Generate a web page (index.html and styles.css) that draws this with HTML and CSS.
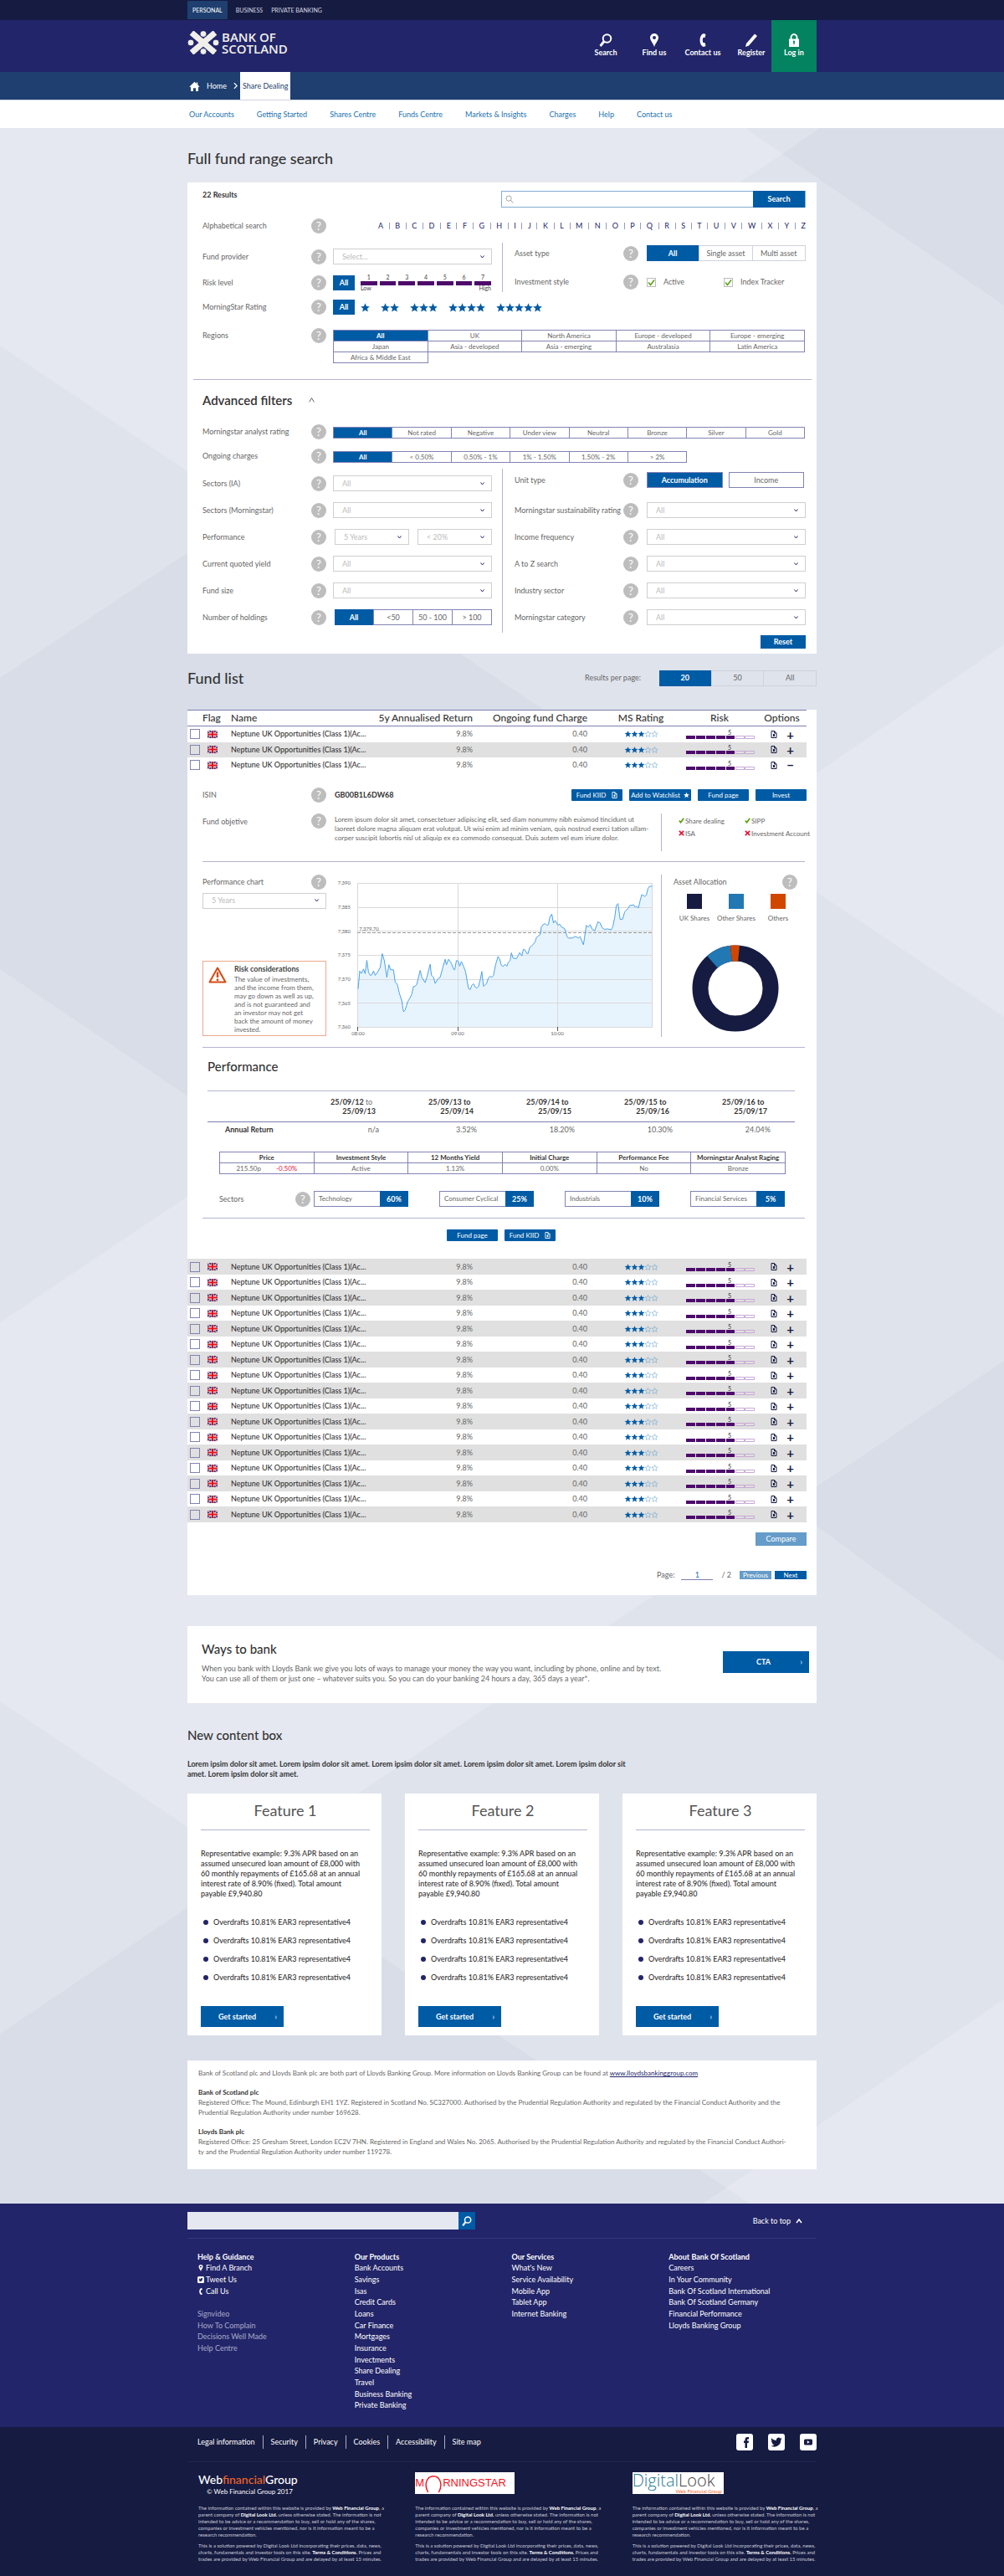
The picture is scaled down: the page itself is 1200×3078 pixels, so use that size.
FILE: index.html
```html
<!DOCTYPE html>
<html lang="en">
<head>
<meta charset="utf-8">
<meta name="viewport" content="width=device-width, initial-scale=1">
<title>Full fund range search - Bank of Scotland</title>
<link rel="stylesheet" href="styles.css">
</head>
<body id="top">
<svg class="sprite" aria-hidden="true">
  <symbol id="i-search" viewBox="0 0 16 16"><circle cx="9.500" cy="6" r="4.800" fill="none" stroke="currentColor" stroke-width="2"/><path d="M6 9.500 1.500 15" stroke="currentColor" stroke-width="2.800" fill="none"/></symbol>
  <symbol id="i-lens" viewBox="0 0 16 16"><circle cx="6.500" cy="6.500" r="5" fill="none" stroke="currentColor" stroke-width="1"/><path d="m10 10 5 5" stroke="currentColor" stroke-width="1.200" fill="none"/></symbol>
  <symbol id="i-pin" viewBox="0 0 16 16"><path fill="currentColor" fill-rule="evenodd" d="M8 0a5 5 0 0 0-5 5c0 3.500 3.800 6.500 5 11 1.200-4.500 5-7.500 5-11a5 5 0 0 0-5-5zm0 3a2 2 0 1 1 0 4 2 2 0 0 1 0-4z"/></symbol>
  <symbol id="i-phone" viewBox="0 0 16 16"><path fill="currentColor" d="M9 0c-3 1-4.500 4-4.500 8s1.500 7 4.500 8l2.500-1-1-4-2 .3C7.600 9.500 7.600 6.500 8.500 4.700l2 .3 1-4z"/></symbol>
  <symbol id="i-pen" viewBox="0 0 16 16"><path fill="currentColor" d="m12 .5 3 2.500L5 14.500 1 16l1-4z"/></symbol>
  <symbol id="i-lock" viewBox="0 0 16 16"><path d="M4.500 7V5a3.500 4 0 0 1 7 0v2" fill="none" stroke="currentColor" stroke-width="2"/><path fill="currentColor" fill-rule="evenodd" d="M2 6.500h12V16H2zm6 2a1.300 1.300 0 0 0-.7 2.300V13h1.400v-2.200A1.300 1.300 0 0 0 8 8.500z"/></symbol>
  <symbol id="i-home" viewBox="0 0 16 16"><path fill="currentColor" d="M8 1 0 8.500l1 1 1-.8V16h4v-5h4v5h4V8.700l1 .8 1-1-3-2.800V2h-2v2z"/></symbol>
  <symbol id="i-star" viewBox="0 0 16 16"><path fill="currentColor" d="m8 .5 2.200 5.200 5.600.4-4.300 3.600 1.400 5.600L8 12.200l-4.900 3.100 1.400-5.600L.2 6.100l5.600-.4z"/></symbol>
  <symbol id="i-star3" viewBox="0 0 80 16">
    <g fill="#005ba5"><path id="s" d="m8 .5 2.200 5.200 5.600.4-4.300 3.600 1.400 5.600L8 12.200l-4.900 3.100 1.400-5.600L.2 6.100l5.600-.4z"/><use href="#s" x="16"/><use href="#s" x="32"/></g>
    <path id="o" fill="none" stroke="#5f9ccb" d="m56 1 2 5 5.200.3-4 3.300 1.300 5.200L56 12l-4.500 2.800 1.300-5.200-4-3.300L54 6z"/><use href="#o" x="16"/>
  </symbol>
  <symbol id="i-risk" viewBox="0 0 82 5"><path fill="#4d0a6b" d="M0 1h11v4H0zM12 1h11v4H12zM24 1h11v4H24zM36 1h11v4H36zM48 1h10v4H48z"/><path fill="none" stroke="#c9a9d6" d="M59.500 1.500h10v3h-10zM70.500 1.500h11v3h-11z"/></symbol>
  <symbol id="i-doc" viewBox="0 0 8 9"><path fill="none" stroke="currentColor" d="M1 .5h3.500L7 3v5.500H1zM4.500.5V3H7"/><path fill="currentColor" d="M3 4h2v3H3z"/></symbol>
  <symbol id="i-flag" viewBox="0 0 12 9"><path fill="#1f2a7c" d="M0 0h12v9H0z"/><path stroke="#fff" stroke-width="1.400" d="m0 0 12 9M12 0 0 9"/><path stroke="#d22" stroke-width=".6" d="m0 0 12 9M12 0 0 9"/><path stroke="#fff" stroke-width="3" d="M6 0v9M0 4.500h12"/><path stroke="#e0101c" stroke-width="2" d="M6 0v9M0 4.500h12"/></symbol>
  <symbol id="i-bird" viewBox="0 0 24 24"><path fill="currentColor" d="M22 5.900c-.7.300-1.500.6-2.400.7.900-.5 1.500-1.300 1.800-2.300-.8.500-1.700.8-2.600 1a4.100 4.100 0 0 0-7 3.700C8.400 8.800 5.400 7.200 3.400 4.700a4.100 4.100 0 0 0 1.300 5.500c-.7 0-1.300-.2-1.900-.5 0 2 1.400 3.700 3.300 4.100-.6.200-1.200.2-1.900.1a4.100 4.100 0 0 0 3.900 2.800A8.200 8.200 0 0 1 2 18.400 11.600 11.600 0 0 0 20 8c.8-.6 1.500-1.300 2-2.100z"/></symbol>
  <symbol id="i-tick" viewBox="0 0 8 8"><path fill="none" stroke="#5aa416" stroke-width="2" d="m1 4 2 2.500L7 1"/></symbol>
  <symbol id="i-cross" viewBox="0 0 8 8"><path fill="none" stroke="#e3173e" stroke-width="2" d="m1 1 6 6M7 1 1 7"/></symbol>
</svg>

<header>
  <div class="topbar"><nav class="wrap" aria-label="Sites"><a class="on" href="#">PERSONAL</a><a href="#">BUSINESS</a><a href="#">PRIVATE BANKING</a></nav></div>
  <div class="brandbar"><div class="wrap">
    <a class="logo" href="#">
      <svg viewBox="0 0 38 28" aria-hidden="true"><path stroke="#f0efe9" stroke-width="7" d="M5 2 33 26M33 2 5 26"/><g fill="#f0efe9" stroke="#222569"><circle cx="19" cy="3.500" r="4"/><circle cx="19" cy="24.500" r="4"/><circle cx="4" cy="14" r="4"/><circle cx="34" cy="14" r="4"/></g></svg>
      <span>BANK OF<br>SCOTLAND</span></a>
    <nav class="tools" aria-label="Tools">
      <a href="#"><svg><use href="#i-search"/></svg>Search</a>
      <a href="#"><svg><use href="#i-pin"/></svg>Find us</a>
      <a href="#"><svg><use href="#i-phone"/></svg>Contact us</a>
      <a href="#"><svg><use href="#i-pen"/></svg>Register</a>
      <a class="login" href="#"><svg><use href="#i-lock"/></svg>Log in</a>
    </nav>
  </div></div>
  <div class="crumbs"><nav class="wrap" aria-label="Breadcrumb"><a href="#"><svg><use href="#i-home"/></svg>Home</a><svg class="chev" viewBox="0 0 6 8" aria-hidden="true"><path d="m1 0 4 4-4 4" fill="none" stroke="#fff" stroke-width="1.500"/></svg><a class="here" href="#">Share Dealing</a></nav></div>
  <div class="mainnav"><nav class="wrap" aria-label="Main"><a href="#">Our Accounts</a><a href="#">Getting Started</a><a href="#">Shares Centre</a><a href="#">Funds Centre</a><a href="#">Markets &amp; Insights</a><a href="#">Charges</a><a href="#">Help</a><a href="#">Contact us</a></nav></div>
</header>

<main>
<svg class="facets" viewBox="0 153 1200 2480" preserveAspectRatio="none" aria-hidden="true">
  <path fill="#e5e8f1" d="M0 153h891l44 31-638 428L0 413zM871 996l329-226v445zM0 1580l313-210 629 429-646 432L0 2033zM868 2614l332-225v244H896z"/>
  <path fill="#d8dde8" d="M980 153h220v212L935 184zM0 810l297-198 574 384-558 374L0 1158zM942 1799l258-173v360zM0 2430l296-199 572 383-28 19H0z"/>
</svg>
<div class="wrap">
<h1>Full fund range search</h1>

<section class="panel filters">
  <div class="find"><strong>22 Results</strong>
    <form><svg><use href="#i-lens"/></svg><input type="text" aria-label="Search funds"><button class="btn" type="button">Search</button></form></div>
  <div class="row alpha"><span>Alphabetical search</span><button class="help">?</button>
    <div class="letters"><a href="#">A</a><i></i><a href="#">B</a><i></i><a href="#">C</a><i></i><a href="#">D</a><i></i><a href="#">E</a><i></i><a href="#">F</a><i></i><a href="#">G</a><i></i><a href="#">H</a><i></i><a href="#">I</a><i></i><a href="#">J</a><i></i><a href="#">K</a><i></i><a href="#">L</a><i></i><a href="#">M</a><i></i><a href="#">N</a><i></i><a href="#">O</a><i></i><a href="#">P</a><i></i><a href="#">Q</a><i></i><a href="#">R</a><i></i><a href="#">S</a><i></i><a href="#">T</a><i></i><a href="#">U</a><i></i><a href="#">V</a><i></i><a href="#">W</a><i></i><a href="#">X</a><i></i><a href="#">Y</a><i></i><a href="#">Z</a></div></div>
  <div class="halves">
    <div class="half left basic">
      <div class="row"><label for="provider">Fund provider</label><button class="help">?</button><select id="provider"><option>Select...</option></select></div>
      <div class="row"><span>Risk level</span><button class="help">?</button><div class="allplus"><button class="btn all">All</button>
        <div class="scale"><span>1</span><span>2</span><span>3</span><span>4</span><span>5</span><span>6</span><span>7</span><em>Low</em><em>High</em></div></div></div>
    </div>
    <div class="half right">
      <div class="row"><span>Asset type</span><button class="help">?</button><div class="seg pale"><button class="on">All</button><button>Single asset</button><button>Multi asset</button></div></div>
      <div class="row"><span>Investment style</span><button class="help">?</button><div class="checks"><label><input type="checkbox" checked>Active</label><label><input type="checkbox" checked>Index Tracker</label></div></div>
    </div>
  </div>
  <div class="row stars-row"><span>MorningStar Rating</span><button class="help">?</button><div class="allplus"><button class="btn all">All</button>
    <div class="stars">
      <button aria-label="1 star"><svg><use href="#i-star"/></svg></button>
      <button aria-label="2 stars"><svg><use href="#i-star"/></svg><svg><use href="#i-star"/></svg></button>
      <button aria-label="3 stars"><svg><use href="#i-star"/></svg><svg><use href="#i-star"/></svg><svg><use href="#i-star"/></svg></button>
      <button aria-label="4 stars"><svg><use href="#i-star"/></svg><svg><use href="#i-star"/></svg><svg><use href="#i-star"/></svg><svg><use href="#i-star"/></svg></button>
      <button aria-label="5 stars"><svg><use href="#i-star"/></svg><svg><use href="#i-star"/></svg><svg><use href="#i-star"/></svg><svg><use href="#i-star"/></svg><svg><use href="#i-star"/></svg></button>
    </div></div></div>
  <div class="row regions"><span>Regions</span><button class="help">?</button>
    <div class="cells five"><button class="on">All</button><button>UK</button><button>North America</button><button>Europe - developed</button><button>Europe - emerging</button><button>Japan</button><button>Asia - developed</button><button>Asia - emerging</button><button>Australasia</button><button>Latin America</button><button>Africa &amp; Middle East</button></div></div>
  <hr class="wide">
  <h2 class="adv">Advanced filters <button aria-label="Collapse"><svg viewBox="0 0 6 5"><path d="M.5 4.500 3 .5l2.500 4" fill="none" stroke="#555" stroke-width=".8"/></svg></button></h2>
  <div class="row first-adv"><span>Morningstar analyst rating</span><button class="help">?</button>
    <div class="cells eight"><button class="on">All</button><button>Not rated</button><button>Negative</button><button>Under view</button><button>Neutral</button><button>Bronze</button><button>Silver</button><button>Gold</button></div></div>
  <div class="row second-adv"><span>Ongoing charges</span><button class="help">?</button>
    <div class="cells eight"><button class="on">All</button><button>&lt; 0.50%</button><button>0.50% - 1%</button><button>1% - 1.50%</button><button>1.50% - 2%</button><button>&gt; 2%</button></div></div>
  <div class="halves adv-halves">
    <div class="half left">
      <div class="row"><label for="ia">Sectors (IA)</label><button class="help">?</button><select id="ia"><option>All</option></select></div>
      <div class="row"><label for="ms">Sectors (Morningstar)</label><button class="help">?</button><select id="ms"><option>All</option></select></div>
      <div class="row"><label for="perf">Performance</label><button class="help">?</button><div class="pair"><select id="perf"><option>5 Years</option></select><select aria-label="Performance range"><option>&lt; 20%</option></select></div></div>
      <div class="row"><label for="yield">Current quoted yield</label><button class="help">?</button><select id="yield"><option>All</option></select></div>
      <div class="row"><label for="size">Fund size</label><button class="help">?</button><select id="size"><option>All</option></select></div>
      <div class="row"><span>Number of holdings</span><button class="help">?</button><div class="seg inset"><button class="on">All</button><button>&lt;50</button><button>50 - 100</button><button>&gt; 100</button></div></div>
    </div>
    <div class="half right">
      <div class="row"><span>Unit type</span><button class="help">?</button><div class="units"><button class="on">Accumulation</button><button>Income</button></div></div>
      <div class="row"><label for="sus">Morningstar sustainability rating</label><button class="help">?</button><select id="sus"><option>All</option></select></div>
      <div class="row"><label for="freq">Income frequency</label><button class="help">?</button><select id="freq"><option>All</option></select></div>
      <div class="row"><label for="az">A to Z search</label><button class="help">?</button><select id="az"><option>All</option></select></div>
      <div class="row"><label for="ind">Industry sector</label><button class="help">?</button><select id="ind"><option>All</option></select></div>
      <div class="row"><label for="cat">Morningstar category</label><button class="help">?</button><select id="cat"><option>All</option></select></div>
    </div>
  </div>
  <button class="btn reset">Reset</button>
</section>

<div class="listhead"><h2>Fund list</h2><span>Results per page:</span><div class="seg pale"><button class="on">20</button><button>50</button><button>All</button></div></div>

<section class="panel funds">
<table class="list">
<colgroup><col class="c1"><col class="c2"><col><col class="c4"><col class="c5"><col class="c6"><col class="c7"><col class="c8"></colgroup>
<thead><tr><th></th><th class="f">Flag</th><th>Name</th><th class="n">5y Annualised Return</th><th class="n c">Ongoing fund Charge</th><th class="m">MS Rating</th><th class="m">Risk</th><th class="m">Options</th></tr></thead>
<tbody>
<tr><td><input type="checkbox" aria-label="Select fund"></td><td><svg class="flag"><use href="#i-flag"/></svg></td><td>Neptune UK Opportunities (Class 1)(Ac...</td><td class="n">9.8%</td><td class="n c">0.40</td><td class="m"><svg class="st"><use href="#i-star3"/></svg></td><td class="m"><span class="rk">5<svg><use href="#i-risk"/></svg></span></td><td class="m"><button class="op"><svg><use href="#i-doc"/></svg></button><button class="op">+</button></td></tr>
<tr class="g"><td><input type="checkbox" aria-label="Select fund"></td><td><svg class="flag"><use href="#i-flag"/></svg></td><td>Neptune UK Opportunities (Class 1)(Ac...</td><td class="n">9.8%</td><td class="n c">0.40</td><td class="m"><svg class="st"><use href="#i-star3"/></svg></td><td class="m"><span class="rk">5<svg><use href="#i-risk"/></svg></span></td><td class="m"><button class="op"><svg><use href="#i-doc"/></svg></button><button class="op">+</button></td></tr>
<tr><td><input type="checkbox" aria-label="Select fund"></td><td><svg class="flag"><use href="#i-flag"/></svg></td><td>Neptune UK Opportunities (Class 1)(Ac...</td><td class="n">9.8%</td><td class="n c">0.40</td><td class="m"><svg class="st"><use href="#i-star3"/></svg></td><td class="m"><span class="rk">5<svg><use href="#i-risk"/></svg></span></td><td class="m"><button class="op"><svg><use href="#i-doc"/></svg></button><button class="op">−</button></td></tr>
</tbody>
</table>

<div class="detail">
  <div class="row isin"><span>ISIN</span><button class="help">?</button><div class="isinline"><strong>GB00B1L6DW68</strong><button class="btn sm">Fund KIID <svg><use href="#i-doc"/></svg></button><button class="btn sm watch">Add to Watchlist <svg><use href="#i-star"/></svg></button><button class="btn sm">Fund page</button><button class="btn sm">Invest</button></div></div>
  <div class="row objective"><span>Fund objetive</span><button class="help">?</button>
    <p>Lorem ipsum dolor sit amet, consectetuer adipiscing elit, sed diam nonummy nibh euismod tincidunt ut<br>laoreet dolore magna aliquam erat volutpat. Ut wisi enim ad minim veniam, quis nostrud exerci tation ullam-<br>corper suscipit lobortis nisl ut aliquip ex ea commodo consequat. Duis autem vel eum iriure dolor.</p>
    <ul><li><svg><use href="#i-tick"/></svg>Share dealing</li><li><svg><use href="#i-tick"/></svg>SIPP</li><li><svg><use href="#i-cross"/></svg>ISA</li><li><svg><use href="#i-cross"/></svg>Investment Account</li></ul></div>
  <hr>
  <div class="charts">
    <div class="perfcol">
      <div class="lab"><label for="period">Performance chart</label><button class="help">?</button></div>
      <select id="period"><option>5 Years</option></select>
      <div class="risk"><svg viewBox="0 0 22 20" aria-hidden="true"><path d="M11 1.500 20.500 18.500H1.500z" fill="none" stroke="#d24a12" stroke-width="2" stroke-linejoin="round"/><path d="M11 6.500V13M11 14.500V17" stroke="#d24a12" stroke-width="2.400"/></svg>
        <div><strong>Risk considerations</strong><p>The value of investments,<br>and the income from them,<br>may go down as well as up,<br>and is not guaranteed and<br>an investor may not get<br>back the amount of money<br>invested.</p></div></div>
    </div>
    <svg class="line" viewBox="0 0 380 194" role="img" aria-label="Price history">
      <svg x="27" y="10" width="353" height="172" viewBox="436 106 709 517" preserveAspectRatio="none">
        <path fill="#e8f4fd" d="M438 623V487L442 422 446 431 451 415 455 432 459 384 463 427 467 438 471 436 475 422 479 438 484 428 491 410 496 360 501 385 507 445 512 400 516 418 523 418 527 462 532 470 537 502 543 530 547 569 551 562 557 533 563 518 567 505 571 478 575 477 579 470 587 420 591 445 599 464 604 440 611 398 614 437 619 445 623 467 630 450 635 445 641 412 647 380 650 400 655 380 662 395 667 415 670 418 674 385 678 386 682 405 686 388 691 405 696 425 700 460 703 485 707 489 711 474 715 468 719 480 723 484 727 478 731 455 735 424 739 477 746 468 751 447 755 441 759 445 763 438 768 400 774 370 778 380 782 402 786 406 791 398 795 405 799 390 803 385 806 357 810 376 818 378 823 365 826 356 831 368 835 344 839 347 843 359 846 360 850 338 855 332 863 318 866 302 871 296 875 292 878 264 882 256 887 252 891 258 895 256 898 230 903 218 907 250 911 241 918 258 922 254 927 265 934 270 940 300 943 304 952 304 960 298 967 304 971 299 979 328 986 258 990 265 995 256 1000 272 1006 278 1014 245 1019 250 1024 267 1030 273 1036 271 1046 274 1050 260 1054 230 1058 186 1062 180 1067 237 1073 236 1078 210 1086 198 1091 186 1095 187 1099 184 1103 193 1106 190 1111 196 1115 170 1119 148 1126 154 1130 150 1134 125 1138 118 1144 118V623z"/>
      </svg>
      <path fill="none" stroke="#d9d9d9" d="M27 10.500h353M27 39.500h353M27 67.500h353M27 96.500h353M27 125.500h353M27 153.500h353M27 182.500h353M27.500 10v172M147.500 10v172M266.500 10v172M379.500 10v172"/>
      <path fill="none" stroke="#999" stroke-dasharray="4 2" d="M27 69.500h353"/>
      <path fill="none" stroke="#555" d="M27.500 182v5M147.500 182v5M266.500 182v5"/>
      <svg x="27" y="10" width="353" height="172" viewBox="436 106 709 517" preserveAspectRatio="none">
        <path fill="none" stroke="#4aa3ea" vector-effect="non-scaling-stroke" d="M438 487L442 422 446 431 451 415 455 432 459 384 463 427 467 438 471 436 475 422 479 438 484 428 491 410 496 360 501 385 507 445 512 400 516 418 523 418 527 462 532 470 537 502 543 530 547 569 551 562 557 533 563 518 567 505 571 478 575 477 579 470 587 420 591 445 599 464 604 440 611 398 614 437 619 445 623 467 630 450 635 445 641 412 647 380 650 400 655 380 662 395 667 415 670 418 674 385 678 386 682 405 686 388 691 405 696 425 700 460 703 485 707 489 711 474 715 468 719 480 723 484 727 478 731 455 735 424 739 477 746 468 751 447 755 441 759 445 763 438 768 400 774 370 778 380 782 402 786 406 791 398 795 405 799 390 803 385 806 357 810 376 818 378 823 365 826 356 831 368 835 344 839 347 843 359 846 360 850 338 855 332 863 318 866 302 871 296 875 292 878 264 882 256 887 252 891 258 895 256 898 230 903 218 907 250 911 241 918 258 922 254 927 265 934 270 940 300 943 304 952 304 960 298 967 304 971 299 979 328 986 258 990 265 995 256 1000 272 1006 278 1014 245 1019 250 1024 267 1030 273 1036 271 1046 274 1050 260 1054 230 1058 186 1062 180 1067 237 1073 236 1078 210 1086 198 1091 186 1095 187 1099 184 1103 193 1106 190 1111 196 1115 170 1119 148 1126 154 1130 150 1134 125 1138 118 1144 118"/>
      </svg>
      <g class="ax"><text x="19" y="12">7,390</text><text x="19" y="41">7,385</text><text x="19" y="70">7,380</text><text x="19" y="98">7,375</text><text x="19" y="127">7,370</text><text x="19" y="156">7,365</text><text x="19" y="184">7,360</text></g>
      <g class="ax mid"><text x="28" y="192">08:00</text><text x="147" y="192">09:00</text><text x="266" y="192">10:00</text><text x="41" y="67">7,379.70</text></g>
    </svg>
    <div class="alloc">
      <div class="lab"><span>Asset Allocation</span><button class="help">?</button></div>
      <ul><li class="k1">UK Shares</li><li class="k2">Other Shares</li><li class="k3">Others</li></ul>
      <svg viewBox="-52 -52 104 104" role="img" aria-label="Asset allocation"><g fill="none" stroke-width="19"><circle r="42" stroke="#161b41"/><path stroke="#2278b3" d="M-27.500-31.700A42 42 0 0 1-5-41.700"/><path stroke="#d24700" d="M-5-41.700A42 42 0 0 1 4-41.800"/></g></svg>
    </div>
  </div>
  <hr>
  <h3>Performance</h3>
  <table class="years">
    <thead><tr><td></td><th><span>25/09/12 <em>to</em></span><span>25/09/13</span></th><th><span>25/09/13 to</span><span>25/09/14</span></th><th><span>25/09/14 to</span><span>25/09/15</span></th><th><span>25/09/15 to</span><span>25/09/16</span></th><th><span>25/09/16 to</span><span>25/09/17</span></th></tr></thead>
    <tbody><tr><th scope="row">Annual Return</th><td>n/a</td><td>3.52%</td><td>18.20%</td><td>10.30%</td><td>24.04%</td></tr></tbody>
  </table>
  <table class="facts">
    <thead><tr><th>Price</th><th>Investment Style</th><th>12 Months Yield</th><th>Initial Charge</th><th>Performance Fee</th><th>Morningstar Analyst Raging</th></tr></thead>
    <tbody><tr><td>215.50p <span class="down">-0.50%</span></td><td>Active</td><td>1.13%</td><td>0.00%</td><td>No</td><td>Bronze</td></tr></tbody>
  </table>
  <div class="sectors"><span>Sectors</span><button class="help">?</button>
    <dl><div><dt>Technology</dt><dd>60%</dd></div><div><dt>Consumer Cyclical</dt><dd>25%</dd></div><div><dt>Industrials</dt><dd>10%</dd></div><div><dt>Financial Services</dt><dd>5%</dd></div></dl></div>
  <hr>
  <div class="center"><button class="btn sm">Fund page</button><button class="btn sm">Fund KIID <svg><use href="#i-doc"/></svg></button></div>
</div>

<table class="list more" aria-label="More funds">
<colgroup><col class="c1"><col class="c2"><col><col class="c4"><col class="c5"><col class="c6"><col class="c7"><col class="c8"></colgroup>
<tbody id="more">
</tbody>
</table>
<button class="btn compare">Compare</button>
<div class="pager"><label for="page">Page:</label><input id="page" type="text" value="1"><span>/ 2</span><button class="btn faded">Previous</button><button class="btn">Next</button></div>
</section>

<section class="ways"><div><h2>Ways to bank</h2><p>When you bank with Lloyds Bank we give you lots of ways to manage your money the way you want, including by phone, online and by text.<br>You can use all of them or just one – whatever suits you. So you can do your banking 24 hours a day, 365 days a year*.</p></div><a class="btn cta" href="#">CTA<i>›</i></a></section>

<h2 class="newbox">New content box</h2>
<p class="intro">Lorem ipsim dolor sit amet. Lorem ipsim dolor sit amet. Lorem ipsim dolor sit amet. Lorem ipsim dolor sit amet. Lorem ipsim dolor sit<br>amet. Lorem ipsim dolor sit amet.</p>
<div class="cards">
  <article><h3>Feature 1</h3><p>Representative example: 9.3% APR based on an<br>assumed unsecured loan amount of £8,000 with<br>60 monthly repayments of £165.68 at an annual<br>interest rate of 8.90% (fixed). Total amount<br>payable £9,940.80</p><ul><li>Overdrafts 10.81% EAR3 representative4</li><li>Overdrafts 10.81% EAR3 representative4</li><li>Overdrafts 10.81% EAR3 representative4</li><li>Overdrafts 10.81% EAR3 representative4</li></ul><a class="btn go" href="#">Get started<i>›</i></a></article>
  <article><h3>Feature 2</h3><p>Representative example: 9.3% APR based on an<br>assumed unsecured loan amount of £8,000 with<br>60 monthly repayments of £165.68 at an annual<br>interest rate of 8.90% (fixed). Total amount<br>payable £9,940.80</p><ul><li>Overdrafts 10.81% EAR3 representative4</li><li>Overdrafts 10.81% EAR3 representative4</li><li>Overdrafts 10.81% EAR3 representative4</li><li>Overdrafts 10.81% EAR3 representative4</li></ul><a class="btn go" href="#">Get started<i>›</i></a></article>
  <article><h3>Feature 3</h3><p>Representative example: 9.3% APR based on an<br>assumed unsecured loan amount of £8,000 with<br>60 monthly repayments of £165.68 at an annual<br>interest rate of 8.90% (fixed). Total amount<br>payable £9,940.80</p><ul><li>Overdrafts 10.81% EAR3 representative4</li><li>Overdrafts 10.81% EAR3 representative4</li><li>Overdrafts 10.81% EAR3 representative4</li><li>Overdrafts 10.81% EAR3 representative4</li></ul><a class="btn go" href="#">Get started<i>›</i></a></article>
</div>
<section class="legal">
  <p>Bank of Scotland plc and Lloyds Bank plc are both part of Lloyds Banking Group. More information on Lloyds Banking Group can be found at <a href="#">www.lloydsbankinggroup.com</a></p>
  <p><strong>Bank of Scotland plc</strong><br>Registered Office: The Mound, Edinburgh EH1 1YZ. Registered in Scotland No. SC327000. Authorised by the Prudential Regulation Authority and regulated by the Financial Conduct Authority and the<br>Prudential Regulation Authority under number 169628.</p>
  <p><strong>Lloyds Bank plc</strong><br>Registered Office: 25 Gresham Street, London EC2V 7HN. Registered in England and Wales No. 2065. Authorised by the Prudential Regulation Authority and regulated by the Financial Conduct Authori-<br>ty and the Prudential Regulation Authority under number 119278.</p>
</section>
</div>
</main>

<footer>
<div class="foot1"><div class="wrap">
  <div class="fsearch"><form><input type="text" aria-label="Search the site"><button type="button" aria-label="Search"><svg><use href="#i-search"/></svg></button></form><a href="#top">Back to top <svg viewBox="0 0 8 6"><path d="m1 5 3-4 3 4" fill="none" stroke="#fff" stroke-width="1.500"/></svg></a></div>
  <div class="fcols">
    <ul><li><b>Help &amp; Guidance</b></li><li><a href="#"><svg><use href="#i-pin"/></svg>Find A Branch</a></li><li><a href="#"><svg class="tw" viewBox="0 0 16 16"><rect width="16" height="16" rx="3" fill="#fff"/><use href="#i-bird" x="2" y="2" width="12" height="12" color="#222569"/></svg>Tweet Us</a></li><li><a href="#"><svg><use href="#i-phone"/></svg>Call Us</a></li><li></li><li class="dim"><a href="#">Signvideo</a></li><li class="dim"><a href="#">How To Complain</a></li><li class="dim"><a href="#">Decisions Well Made</a></li><li class="dim"><a href="#">Help Centre</a></li></ul>
    <ul><li><b>Our Products</b></li><li><a href="#">Bank Accounts</a></li><li><a href="#">Savings</a></li><li><a href="#">Isas</a></li><li><a href="#">Credit Cards</a></li><li><a href="#">Loans</a></li><li><a href="#">Car Finance</a></li><li><a href="#">Mortgages</a></li><li><a href="#">Insurance</a></li><li><a href="#">Invectments</a></li><li><a href="#">Share Dealing</a></li><li><a href="#">Travel</a></li><li><a href="#">Business Banking</a></li><li><a href="#">Private Banking</a></li></ul>
    <ul><li><b>Our Services</b></li><li><a href="#">What's New</a></li><li><a href="#">Service Availability</a></li><li><a href="#">Mobile App</a></li><li><a href="#">Tablet App</a></li><li><a href="#">Internet Banking</a></li></ul>
    <ul><li><b>About Bank Of Scotland</b></li><li><a href="#">Careers</a></li><li><a href="#">In Your Community</a></li><li><a href="#">Bank Of Scotland International</a></li><li><a href="#">Bank Of Scotland Germany</a></li><li><a href="#">Financial Performance</a></li><li><a href="#">Lloyds Banking Group</a></li></ul>
  </div>
</div></div>
<div class="foot2"><div class="wrap">
  <div class="flinks"><nav aria-label="Legal"><a href="#">Legal information</a><a href="#">Security</a><a href="#">Privacy</a><a href="#">Cookies</a><a href="#">Accessibility</a><a href="#">Site map</a></nav>
    <div class="social">
      <a href="#" aria-label="Facebook"><svg viewBox="0 0 20 20"><rect width="20" height="20" rx="3" fill="#fff"/><path fill="#161b41" d="M10.500 17v-6H9V8.500h1.500V7c0-2 1-3 3-3H15v2.500h-1c-.7 0-1 .3-1 1v1h2L14.700 11H13v6z"/></svg></a>
      <a href="#" aria-label="Twitter"><svg viewBox="0 0 20 20"><rect width="20" height="20" rx="3" fill="#fff"/><use href="#i-bird" x="2" y="2" width="16" height="16" color="#161b41"/></svg></a>
      <a href="#" aria-label="YouTube"><svg viewBox="0 0 20 20"><rect width="20" height="20" rx="3" fill="#fff"/><rect x="5" y="6.500" width="10" height="7" rx="1.500" fill="#161b41"/><path fill="#fff" d="m8.800 8.200 3 1.800-3 1.800z"/></svg></a>
    </div></div>
  <div class="fpartners">
    <div><div class="wfg">Web<em>financial</em>Group</div><p class="copy">© Web Financial Group 2017</p><p>The information contained within this website is provided by <b>Web Financial Group</b>, a<br>parent company of <b>Digital Look Ltd.</b> unless otherwise stated. The information is not<br>intended to be advice or a recommendation to buy, sell or hold any of the shares,<br>companies or investment vehicles mentioned, nor is it information meant to be a<br>research recommendation.</p><p>This is a solution powered by Digital Look Ltd incorporating their prices, data, news,<br>charts, fundamentals and investor tools on this site. <b>Terms &amp; Conditions.</b> Prices and<br>trades are provided by Web Financial Group and are delayed by at least 15 minutes.</p></div>
    <div><div class="mstar"><span>M</span><svg viewBox="0 0 24 24" aria-label="O"><path d="M5 24C-1 13 4 3 12 3s13 10 7 21" fill="none" stroke="#f5121d" stroke-width="1.500"/></svg><span>RNINGSTAR</span></div><p>The information contained within this website is provided by <b>Web Financial Group</b>, a<br>parent company of <b>Digital Look Ltd.</b> unless otherwise stated. The information is not<br>intended to be advice or a recommendation to buy, sell or hold any of the shares,<br>companies or investment vehicles mentioned, nor is it information meant to be a<br>research recommendation.</p><p>This is a solution powered by Digital Look Ltd incorporating their prices, data, news,<br>charts, fundamentals and investor tools on this site. <b>Terms &amp; Conditions.</b> Prices and<br>trades are provided by Web Financial Group and are delayed by at least 15 minutes.</p></div>
    <div><div class="dlook"><span><i>Digital</i>Look</span><small>Web Financial Group</small></div><p>The information contained within this website is provided by <b>Web Financial Group</b>, a<br>parent company of <b>Digital Look Ltd.</b> unless otherwise stated. The information is not<br>intended to be advice or a recommendation to buy, sell or hold any of the shares,<br>companies or investment vehicles mentioned, nor is it information meant to be a<br>research recommendation.</p><p>This is a solution powered by Digital Look Ltd incorporating their prices, data, news,<br>charts, fundamentals and investor tools on this site. <b>Terms &amp; Conditions.</b> Prices and<br>trades are provided by Web Financial Group and are delayed by at least 15 minutes.</p></div>
  </div>
</div></div>
</footer>
<script src="funds.js"></script>
</body>
</html>
```

FILE: funds.js
```js
// Fills the second part of the fund list from the fund data.
const funds = Array.from({ length: 17 }, () => ({
  name: "Neptune UK Opportunities (Class 1)(Ac...", ret: "9.8%", charge: "0.40", risk: 5
}));
document.getElementById("more").innerHTML = funds.map((f, i) =>
  `<tr class="${i % 2 ? "" : "g"}"><td><input type="checkbox" aria-label="Select fund"></td><td><svg class="flag"><use href="#i-flag"/></svg></td><td>${f.name}</td><td class="n">${f.ret}</td><td class="n c">${f.charge}</td><td class="m"><svg class="st"><use href="#i-star3"/></svg></td><td class="m"><span class="rk">${f.risk}<svg><use href="#i-risk"/></svg></span></td><td class="m"><button class="op"><svg><use href="#i-doc"/></svg></button><button class="op">+</button></td></tr>`
).join("");
```

FILE: styles.css
```css
* { box-sizing: border-box; }
body { margin: 0; font: 9px/12px Lato, "Open Sans", sans-serif; color: #666; background: #dfe3ec; }
h1, h2, h3, p, ul, dl, dd { margin: 0; padding: 0; }
ul { list-style: none; }
a { color: inherit; text-decoration: none; }
em, i { font-style: normal; }
button, input, select { font: inherit; color: inherit; margin: 0; padding: 0; border: 0; border-radius: 0; background: none; }
button, a, span, label, td, th, strong, dt, dd, li { white-space: nowrap; }
svg { display: block; flex: none; }
hr { border: 0; height: 1px; margin: 0; background: #b4b5cf; }
.sprite { position: absolute; width: 0; height: 0; }
.wrap { max-width: 752px; margin: 0 auto; }

/* header */
.topbar { background: #161b41; color: #d5d8e3; font-size: 7px; }
.topbar .wrap { display: flex; gap: 10px; height: 24px; align-items: center; }
.brandbar { background: #222569; color: #fff; }
.brandbar .wrap { display: flex; justify-content: space-between; height: 62px; }
.logo { display: flex; gap: 3px; align-items: center; padding-bottom: 8px; color: #f0efe9; font: 600 15px/14px "Open Sans", sans-serif; }
.logo svg { width: 38px; height: 28px; }
.tools { display: flex; font-weight: 700; }
.tools a { display: flex; flex-direction: column; align-items: center; gap: 1px; width: 58px; padding-top: 16px; }
.tools svg { width: 16px; height: 16px; }
.tools .login { width: 54px; margin-left: -5px; background: #03835f; }
.crumbs { background: #1e3f6f; color: #fff; }
.crumbs .wrap { display: flex; height: 33px; align-items: center; }
.crumbs a { display: flex; align-items: center; gap: 8px; padding-left: 2px; }
.crumbs a svg { width: 13px; height: 12px; }
.crumbs .chev { width: 5px; height: 7px; margin: 0 3px 0 8px; }
.crumbs .here { height: 33px; padding: 0 3px; background: #fff; color: #1e3f6f; }
.mainnav { background: #fff; border-top: 1px solid #cfd3de; color: #2272b1; }
.mainnav .wrap { display: flex; gap: 27px; height: 33px; align-items: center; padding-left: 2px; }

/* page */
main { position: relative; padding-bottom: 41px; }
.facets { position: absolute; inset: 0; width: 100%; height: 100%; }
main > .wrap { position: relative; }
h1, h2 { color: #333; font-weight: 500; font-size: 18px; line-height: 22px; }
h1 { padding: 25px 0 18px; }
.panel { background: #fff; }
.btn { display: inline-flex; align-items: center; justify-content: center; background: #005ba5; color: #fff; font-weight: 700; }
.help { width: 18px; height: 18px; border-radius: 50%; background: #bdbdbd; color: #fff; font-size: 13px; line-height: 18px; text-align: center; }
select { appearance: none; width: 100%; height: 19px; padding: 0 10px; border: 1px solid #cfcfcf; color: #bbb; background: #fff url("data:image/svg+xml,%3Csvg xmlns='http://www.w3.org/2000/svg' width='5' height='4'%3E%3Cpath d='M.5.5l2 2.500 2-2.500' fill='none' stroke='%23222569'/%3E%3C/svg%3E") no-repeat right 8px center; }

/* filters */
.filters { display: flex; flex-direction: column; padding: 10px 13px 6px 18px; }
.find { display: flex; justify-content: space-between; align-items: flex-start; height: 20px; }
.find strong { color: #333; line-height: 10px; }
.find form { display: flex; width: 364px; height: 20px; border: 1px solid #84acd3; align-items: center; }
.find form svg { width: 10px; height: 10px; margin-left: 4px; color: #777; }
.find input { flex: 1; min-width: 0; }
.find .btn { width: 62px; height: 20px; }
.row { display: grid; grid-template-columns: 130px 18px 1fr; align-items: center; min-height: 18px; }
.row > :nth-child(3) { margin-left: 8px; }
.row > select, .row > .pair, .row > .inset, .right .row > :nth-child(3) { margin-left: 10px; width: auto; }
.alpha { margin-top: 13px; }
.letters { display: flex; justify-content: space-between; align-items: center; padding-left: 54px; color: #222569; }
.letters i { width: 1px; height: 8px; background: #9a9bc0; }
.halves { display: grid; grid-template-columns: 358px 1fr; margin-top: 11px; }
.half { display: flex; flex-direction: column; }
.half .row { height: 18px; }
.left { padding: 7px 12px 3px 0; gap: 13px; }
.right { padding: 3px 0 0 14px; gap: 17px; border-left: 1px solid #b4b5cf; }
.allplus { display: flex; align-items: center; }
.all { width: 26px; height: 18px; }
.scale { display: grid; grid-template-columns: repeat(7, 1fr); column-gap: 3px; width: 156px; margin-left: 7px; font-size: 7px; line-height: 7px; color: #444; text-align: center; }
.scale span { border-bottom: 5px solid #4d0a6b; padding-bottom: 1px; }
.scale em { grid-column: 1 / 3; text-align: left; }
.scale em:last-child { grid-column: 6 / 8; text-align: right; }
.seg { display: flex; height: 19px; border: 1px solid #8283b3; }
.seg button { flex: 1; border-left: 1px solid #8283b3; }
.seg button:first-child { border-left: 0; }
.seg.pale, .seg.pale button { border-color: #cfd2dc; }
.on, .seg .on { background: #005ba5; color: #fff; font-weight: 700; }
.seg .on { margin: -1px 0 -1px -1px; }
.topbar .on { padding: 5px 6px; background: #1e3f6f; font-weight: 400; }
.checks { display: grid; grid-template-columns: 92px 1fr; }
.checks label { display: flex; align-items: center; gap: 9px; }
input[type=checkbox] { appearance: none; width: 11px; height: 11px; border: 1px solid #bbb; background: #fff; }
input[type=checkbox]:checked { background: url("data:image/svg+xml,%3Csvg xmlns='http://www.w3.org/2000/svg' viewBox='0 0 9 9'%3E%3Cpath d='M1 4.500l2.500 3L8 1.500' fill='none' stroke='%235aa416' stroke-width='1.600'/%3E%3C/svg%3E"); }
.stars-row { margin-top: 9px; }
.stars { display: flex; gap: 13px; margin-left: 7px; color: #005ba5; }
.stars button { display: flex; }
.stars svg { width: 11px; height: 11px; }
.regions { align-items: start; margin-top: 16px; }
.regions > span { line-height: 18px; }
.cells { display: grid; padding-right: 2px; font-size: 8px; line-height: 12px; }
.five { grid-template-columns: repeat(5, 1fr); padding-top: 2px; }
.eight { grid-template-columns: repeat(8, 1fr); }
.cells button { height: 14px; border: 1px solid #8283b3; margin: 0 -1px -1px 0; }
.wide { margin: 20px -7px 0 -11px; }
.adv { display: flex; align-items: center; gap: 20px; margin-top: 14px; font-size: 15px; line-height: 20px; font-weight: 600; }
.adv svg { width: 7px; height: 6px; }
.first-adv { margin-top: 19px; }
.second-adv { margin-top: 11px; }
.adv-halves { margin-top: 6px; }
.adv-halves .left { padding: 8px 12px 10px 0; gap: 14px; }
.adv-halves .right { padding-top: 4px; gap: 14px; }
.adv-halves .right .row:first-child { margin-bottom: 4px; }
.pair, .units { display: grid; grid-template-columns: 1fr 1fr; gap: 10px; }
.units { gap: 7px; padding-right: 2px; }
.units button { height: 19px; border: 1px solid #8283b3; }
.reset { align-self: flex-end; width: 54px; height: 16px; margin-top: 3px; }

/* fund list */
.listhead { display: flex; align-items: center; height: 20px; margin: 19px 0 28px; }
.listhead h2 { flex: 1; }
.listhead .seg { width: 188px; margin-left: 22px; }
.funds { display: flex; flex-direction: column; padding: 0 12px 19px 0; }
.list { table-layout: fixed; width: 100%; border-collapse: collapse; color: #666; }
.list th, .list td { padding: 0; text-align: left; height: 18px; line-height: 12px; vertical-align: middle; }
.c1 { width: 16px; } .c2 { width: 30px; } .c4 { width: 120px; } .c5 { width: 152px; } .c6 { width: 98px; } .c7 { width: 90px; } .c8 { width: 59px; }
.list thead th { font-size: 12px; font-weight: 500; line-height: 16px; height: 19px; color: #333; border-top: 1px solid #7d7fae; border-bottom: 1px solid #7d7fae; }
.list .f { padding-left: 2px; }
.list tr > :nth-child(3) { padding-left: 6px; }
.list td:nth-child(3) { color: #333; font-weight: 500; }
.list .n { text-align: right; }
.list .c { padding-right: 15px; }
.list .m { text-align: center; }
.list tr:nth-child(odd) td { height: 19px; }
.g { background: #e0e0e0; }
.list input { display: block; width: 12px; height: 12px; margin-left: 3px; border-color: #8283b3; background: none; }
.flag { width: 12px; height: 9px; margin-left: 8px; }
.st { width: 41px; height: 8px; margin: 0 auto; }
.rk { display: flex; flex-direction: column; padding-left: 24px; font-size: 7px; line-height: 6px; color: #333; }
.rk svg { width: 82px; height: 5px; margin-left: -19px; align-self: flex-start; }
.op { display: inline-block; width: 20px; vertical-align: middle; color: #161b41; font-weight: 700; font-size: 15px; line-height: 12px; }
.op svg { width: 8px; height: 9px; margin: 0 auto; }

/* expanded fund */
.detail { display: flex; flex-direction: column; padding: 17px 0 21px 18px; }
.detail hr { margin-right: 2px; }
.isinline { display: flex; gap: 8px; align-items: center; }
.isinline strong { flex: 1; padding-left: 2px; color: #333; }
.sm { width: 61px; height: 14px; gap: 7px; border-radius: 1px; font-size: 8px; font-weight: 400; }
.sm svg { width: 7px; height: 8px; }
.watch { width: 74px; gap: 4px; }
.objective { grid-template-columns: 130px 18px 1fr 174px; align-items: start; margin: 13px 0 12px; }
.objective > span { line-height: 20px; }
.objective p { padding: 2px 0 0 2px; font-size: 8px; line-height: 11px; white-space: nowrap; }
.objective ul { display: grid; grid-template-columns: 79px 1fr; align-content: start; gap: 3px 0; height: 45px; padding: 3px 0 0 20px; border-left: 1px solid #b4b5cf; font-size: 8px; }
.objective li { display: flex; align-items: center; gap: 1px; }
.objective li svg { width: 7px; height: 7px; }
.charts { display: grid; grid-template-columns: 148px 1fr 174px; margin: 15px 0 12px; }
.perfcol { display: flex; flex-direction: column; gap: 4px; padding-bottom: 1px; }
.lab { display: flex; justify-content: space-between; align-items: center; height: 18px; }
.risk { display: flex; gap: 9px; margin-top: auto; height: 90px; padding: 4px 6px; border: 1px solid #eda98e; font-size: 8px; line-height: 10px; }
.risk svg { width: 22px; height: 20px; margin-top: 2px; }
.risk strong { display: block; color: #444; font-size: 9px; margin-bottom: 2px; }
.risk p { white-space: nowrap; }
.line { width: 380px; max-width: 100%; height: auto; margin-left: 10px; }
.ax { font-size: 6px; fill: #666; text-anchor: end; }
.ax.mid { text-anchor: middle; }
.alloc { padding: 0 11px 0 14px; border-left: 1px solid #b4b5cf; }
.alloc ul { display: grid; grid-template-columns: repeat(3, 50px); margin: 5px 0 21px; font-size: 8px; line-height: 22px; text-align: center; }
.alloc li { display: flex; flex-direction: column; align-items: center; }
.alloc li::before { content: ""; width: 18px; height: 18px; background: #161b41; }
.alloc .k2::before { background: #2278b3; }
.alloc .k3::before { background: #d24700; }
.alloc > svg { width: 104px; height: 104px; margin: 0 auto; }
.detail h3 { margin: 12px 0 19px 6px; color: #333; font-size: 15px; line-height: 20px; font-weight: 500; }
.years { table-layout: fixed; width: 702px; max-width: 100%; margin-left: 6px; border-collapse: collapse; border-top: 1px solid #b4b5cf; }
.years th, .years td { padding: 0; }
.years thead th { height: 37px; padding-right: 33px; color: #333; line-height: 11px; border-bottom: 1px solid #7d7fae; }
.years thead td { border-bottom: 1px solid #7d7fae; }
.years thead span { display: block; width: 54px; margin-left: auto; text-align: left; }
.years thead span + span { text-align: right; }
.years em { font-weight: 400; color: #777; }
.years tbody td { height: 20px; padding-right: 29px; text-align: right; }
.years tbody th { padding-left: 21px; text-align: left; color: #333; }
.facts { table-layout: fixed; width: 677px; max-width: 100%; margin: 16px 0 20px 20px; border-collapse: collapse; font-size: 8px; text-align: center; }
.facts th, .facts td { height: 13px; padding: 0; border: 1px solid #8283b3; line-height: 11px; }
.facts th { color: #333; }
.down { margin-left: 16px; color: #e3173e; }
.sectors { display: grid; grid-template-columns: 91px 18px 1fr; align-items: center; margin: 0 26px 13px 20px; }
.sectors dl { display: flex; justify-content: space-between; margin-left: 4px; }
.sectors dl div { display: flex; width: 113px; height: 19px; border: 1px solid #8283b3; line-height: 17px; }
.sectors dt { flex: 1; padding-left: 5px; font-size: 8px; }
.sectors dd { width: 34px; margin: -1px; line-height: 19px; text-align: center; background: #005ba5; color: #fff; font-weight: 700; }
.center { display: flex; justify-content: center; gap: 8px; margin-top: 13px; padding-right: 8px; }
.compare { align-self: flex-end; width: 61px; height: 16px; margin: 12px 0 30px; background: #669cc9; font-weight: 400; }
.pager { display: flex; justify-content: flex-end; align-items: center; height: 10px; line-height: 10px; }
.pager input { width: 38px; margin: 0 10px 0 8px; border-bottom: 1px solid #7d7fae; text-align: center; color: #2272b1; }
.pager .btn { width: 38px; height: 10px; margin-left: 4px; font-size: 8px; font-weight: 400; }
.pager .faded { margin-left: 10px; background: #669cc9; }

/* content blocks */
.ways { display: flex; justify-content: space-between; align-items: center; margin-top: 37px; padding: 17px 9px 23px 17px; background: #fff; }
.ways h2, .newbox { font-size: 15px; line-height: 20px; }
.ways p { margin-top: 8px; }
.cta i, .go i { margin-left: auto; margin-right: 8px; font-weight: 400; }
.cta { width: 103px; height: 26px; padding-left: 40px; }
.newbox { margin: 28px 0 19px; }
.intro { color: #333; font-weight: 700; }
.cards { display: grid; grid-template-columns: repeat(3, 1fr); gap: 28px; margin: 17px 0 30px; }
.cards article { padding: 10px 14px 10px 16px; background: #fff; color: #333; font-weight: 500; }
.cards h3 { padding-bottom: 13px; border-bottom: 1px solid #b4b5cf; font-size: 18px; line-height: 20px; font-weight: 400; color: #555; text-align: center; }
.cards p { margin-top: 22px; white-space: nowrap; }
.cards ul { margin: 17px 0 23px; line-height: 22px; }
.cards li { display: flex; align-items: center; gap: 6px; padding-left: 3px; }
.cards li::before { content: ""; width: 6px; height: 6px; border-radius: 50%; background: #222569; }
.go { width: 99px; height: 25px; padding-left: 21px; }
.legal { padding: 9px 0 15px 13px; background: #fff; font-size: 8px; white-space: nowrap; }
.legal p + p { margin-top: 11px; }
.legal strong { color: #333; }
.legal a { color: #222569; text-decoration: underline; }

/* footer */
footer { color: #fff; }
.foot1 { background: #222569; padding-bottom: 19px; }
.fsearch { display: flex; justify-content: space-between; align-items: center; padding: 10px 17px 10px 0; border-bottom: 1px solid #33387a; }
.fsearch form { display: flex; width: 344px; height: 21px; }
.fsearch input { flex: 1; min-width: 0; background: #e5e8f1; }
.fsearch button { width: 20px; background: #005ba5; }
.fsearch button svg { width: 12px; height: 12px; margin: 0 auto; }
.fsearch a { display: flex; align-items: center; gap: 6px; }
.fsearch a svg { width: 8px; height: 6px; }
.fcols { display: grid; grid-template-columns: repeat(4, 1fr); margin: 15px -11px 0 12px; min-height: 191px; }
.fcols ul { display: grid; grid-template-rows: repeat(14, 1fr); align-items: center; line-height: 12px; }
.fcols a { display: flex; align-items: center; gap: 2px; }
.fcols svg { width: 8px; height: 8px; }
.fcols .dim { color: #a9abc9; }
.foot2 { background: #161b41; padding-bottom: 11px; }
.flinks { display: flex; justify-content: space-between; align-items: center; padding: 8px 0 13px 12px; border-bottom: 1px solid #22275a; }
.flinks nav { display: flex; }
.flinks nav a { padding: 2px 9px; border-left: 1px solid #a9abc9; }
.flinks nav a:first-child { padding-left: 0; border: 0; }
.social { display: flex; gap: 18px; }
.social svg { width: 20px; height: 20px; }
.fpartners { display: grid; grid-template-columns: repeat(3, 1fr); column-gap: 28px; padding: 12px 0 0 13px; margin-right: -11px; font-size: 6px; line-height: 8px; color: #c8cad8; }
.fpartners b { color: #fff; }
.fpartners p { margin-bottom: 5px; white-space: nowrap; }
.mstar, .dlook { height: 26px; margin-bottom: 13px; }
.wfg { height: 18px; font: 500 14px/18px Lato, sans-serif; color: #fff; }
.wfg em { color: #f0642a; }
.fpartners .copy { margin: 0 0 11px 10px; font-size: 8px; line-height: 10px; color: #fff; }
.mstar { display: flex; width: 119px; background: #fff; color: #f5121d; font: 13px/26px "Liberation Sans", sans-serif; }
.mstar svg { width: 22px; height: 26px; }
.dlook { display: flex; flex-direction: column; width: 109px; background: #fff; color: #444; }
.dlook span { font: 300 20px/19px "Open Sans", sans-serif; }
.dlook i { color: #2a7a90; }
.dlook small { align-self: flex-end; font-size: 6px; line-height: 7px; color: #f0642a; padding-right: 2px; }
```
